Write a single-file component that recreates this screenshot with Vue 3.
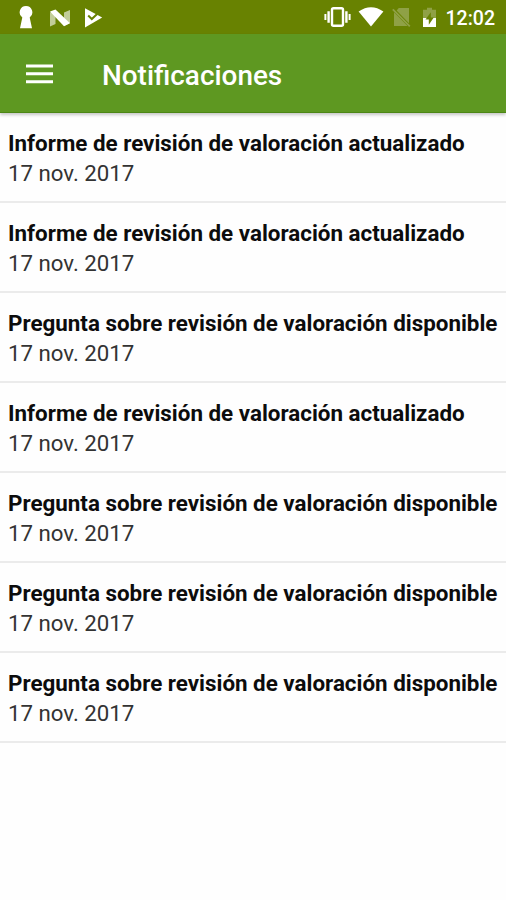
<script setup>
const informe = 'Informe de revisión de valoración actualizado'
const pregunta = 'Pregunta sobre revisión de valoración disponible'
const items = [informe, informe, pregunta, informe, pregunta, pregunta, pregunta].map((title, id) => ({
  id,
  title,
  date: '17 nov. 2017',
}))
</script>

<template>
  <div class="screen">
    <div class="status">
      <div class="left">
        <svg class="keyhole" width="14" height="24" viewBox="0 0 14 24" fill="#fff">
          <path d="M7 1a6.3 6.3 0 0 1 3.7 11.4L13 23.3H1L3.3 12.4A6.3 6.3 0 0 1 7 1z" />
        </svg>
        <svg class="nougat" width="22" height="18" viewBox="0 0 22 18">
          <path d="M1 3.5 6.5 1v14L1 17.5zM15 3.5 21 1v13l-6 3z" fill="#fff" fill-opacity=".6" />
          <path d="M1 2.6 6.5.4 21 14.2l-6 3z" fill="#fff" />
        </svg>
        <svg class="play" width="19" height="20" viewBox="0 0 19 20">
          <path d="M1 .3 18.2 9.6 1 19.4z" fill="#fff" />
          <path d="m4.2 7.5 3.6 3.5L15 4.3" fill="none" stroke="#688201" stroke-width="2" />
        </svg>
      </div>
      <div class="right">
        <svg class="vibrate" width="27" height="20" viewBox="0 0 27 20">
          <g fill="none" stroke="#fff">
            <rect x="8" y="1.3" width="11" height="17.4" rx="1.5" stroke-width="2.4" />
            <path d="M4.6 4.3v11.4M22.4 4.3v11.4" stroke-width="2.4" />
            <path d="M1.4 7v6M25.6 7v6" stroke-width="2" />
          </g>
        </svg>
        <svg class="wifi" width="26" height="20" viewBox="0 0 26 20">
          <path d="M.6 4.5Q13-4 25.4 4.5L13 19.5z" fill="#fff" />
        </svg>
        <svg class="sim" width="19" height="21" viewBox="0 0 19 21">
          <path d="M6.8 1H17v15.2L4.6 3.6zM2 5.2 15.6 19H2z" fill="#8fa146" />
          <path d="m.8 2.3 17 17" stroke="#8fa146" stroke-width="1.8" />
        </svg>
        <svg class="battery" width="15" height="21" viewBox="0 0 15 21">
          <path d="M5 .7h5v2h4V20H1V2.7h4z" fill="#8fa146" />
          <path d="M1 11h13v9H1z" fill="#fff" />
          <path d="M8.8 5.2 3.5 12.5h3.3v5.2l5-7.2H8.8z" fill="#688201" />
        </svg>
        <span class="clock">12:02</span>
      </div>
    </div>
    <header class="bar">
      <svg class="menu" width="27" height="20" viewBox="0 0 27 20" fill="#fff">
        <path d="M0 .4h27v3H0zM0 8.2h27v3H0zM0 16.2h27v3H0z" />
      </svg>
      <h1>Notificaciones</h1>
    </header>
    <main class="list">
      <article v-for="item in items" :key="item.id" class="item">
        <h2>{{ item.title }}</h2>
        <p>{{ item.date }}</p>
      </article>
    </main>
  </div>
</template>

<style>
body {
  background: #fefefe;
}
</style>

<style scoped>
.screen {
  width: 506px;
  height: 900px;
  overflow: hidden;
  display: flex;
  flex-direction: column;
  background: #fefefe;
  font-family: Roboto, "Liberation Sans", sans-serif;
}
svg {
  display: block;
  flex: none;
}
.status {
  height: 34px;
  flex: none;
  display: flex;
  justify-content: space-between;
  background: #688201;
  padding: 0 11px 0 19px;
}
.left,
.right {
  display: flex;
  align-items: flex-start;
}
.keyhole {
  margin-top: 5px;
}
.nougat {
  margin: 9px 0 0 16px;
}
.play {
  margin: 8px 0 0 13px;
}
.vibrate {
  margin-top: 7px;
}
.wifi {
  margin: 7px 0 0 7px;
}
.sim {
  margin: 7px 0 0 8px;
}
.battery {
  margin: 7px 0 0 11px;
}
.clock {
  margin-left: 9px;
  color: #fff;
  font-size: 19.5px;
  font-weight: 500;
  line-height: 37px;
}
.bar {
  height: 79px;
  flex: none;
  display: flex;
  align-items: center;
  gap: 49px;
  padding-left: 26px;
  background: #5e9821;
  border-bottom: 1px solid #4c8715;
  box-sizing: border-box;
  box-shadow: 0 2px 3px rgba(0, 0, 0, 0.22);
  position: relative;
}
.menu {
  margin-top: 1px;
}
h1 {
  margin: 6px 0 0;
  color: #fff;
  font-size: 27.9px;
  font-weight: 500;
  line-height: 36px;
}
.item {
  height: 90px;
  box-sizing: border-box;
  padding: 15px 8px 0;
  border-bottom: 2px solid #ebebeb;
  white-space: nowrap;
}
h2,
p {
  margin: 0;
  line-height: 30px;
}
h2 {
  color: #0c0c0c;
  font-size: 22.38px;
  font-weight: 700;
}
p {
  color: #333;
  font-size: 22.25px;
  font-weight: 400;
}
</style>
